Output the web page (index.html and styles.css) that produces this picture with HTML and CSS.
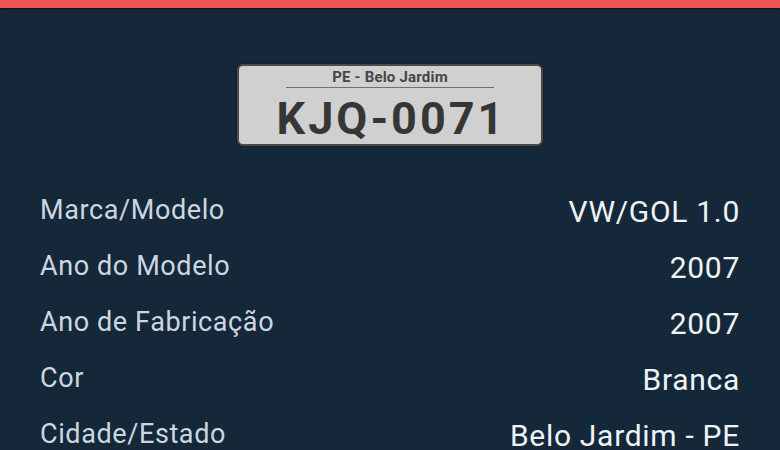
FILE: index.html
```html
<!DOCTYPE html>
<html lang="pt">
<head>
<meta charset="utf-8">
<title>Consulta de Placa</title>
<link rel="stylesheet" href="styles.css">
</head>
<body>
<div class="topbar"></div>
<main class="content">
  <div class="plate-wrap">
    <div class="plate">
      <div class="plate-city">PE - Belo Jardim</div>
      <div class="plate-line"></div>
      <div class="plate-number">KJQ-0071</div>
    </div>
  </div>
  <dl class="details">
    <div class="row"><dt class="label">Marca/Modelo</dt><dd class="value">VW/GOL 1.0</dd></div>
    <div class="row"><dt class="label">Ano do Modelo</dt><dd class="value">2007</dd></div>
    <div class="row"><dt class="label">Ano de Fabricação</dt><dd class="value">2007</dd></div>
    <div class="row"><dt class="label">Cor</dt><dd class="value">Branca</dd></div>
    <div class="row"><dt class="label">Cidade/Estado</dt><dd class="value">Belo Jardim - PE</dd></div>
  </dl>
</main>
</body>
</html>
```
FILE: styles.css
```css
html, body {
  margin: 0;
  padding: 0;
}
body {
  background: #15283a;
  font-family: Roboto, "Liberation Sans", sans-serif;
  overflow: hidden;
  height: 450px;
}
.topbar {
  height: 8px;
  background: #ef5454;
  box-shadow: 0 1px 2px rgba(0, 0, 0, 0.6);
}
.content {
  padding: 0 40px;
}
.plate-wrap {
  display: flex;
  justify-content: center;
  padding-top: 56px;
}
.plate {
  width: 302px;
  background: #d0d0d0;
  border: 2px solid #4a4a4a;
  border-radius: 6px;
  box-shadow: 0 0 2px rgba(0, 0, 0, 0.5);
  padding: 2px 0 1px;
  display: flex;
  flex-direction: column;
  align-items: center;
}
.plate-city {
  font-size: 15px;
  line-height: 18px;
  font-weight: 700;
  letter-spacing: 0.2px;
  color: #464646;
}
.plate-line {
  width: 208px;
  height: 1px;
  margin-top: 1px;
  background: #707070;
}
.plate-number {
  margin-top: 7px;
  font-size: 45px;
  line-height: 48px;
  font-weight: 700;
  letter-spacing: 3px;
  color: #363636;
  padding-left: 3px;
}
.details {
  margin: 36px 0 0;
  padding: 0;
}
.row {
  display: flex;
  justify-content: space-between;
  align-items: center;
  height: 56px;
}
.label {
  margin: 0;
  font-size: 27px;
  letter-spacing: 0.6px;
  color: #cdd6e0;
}
.value {
  margin: 0;
  font-size: 30px;
  letter-spacing: 0.7px;
  color: #eef3f8;
  padding-top: 3px;
}
```
